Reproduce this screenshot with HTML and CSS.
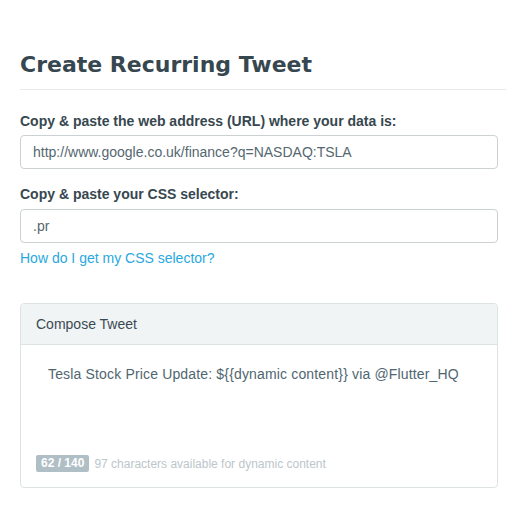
FILE: index.html
```html
<!DOCTYPE html>
<html>
<head>
<meta charset="utf-8">
<link rel="stylesheet" href="styles.css">
</head>
<body>
<div class="page">
  <header class="page-head">
    <h1 class="title">Create Recurring Tweet</h1>
  </header>
  <div class="field field-url">
    <label class="label">Copy &amp; paste the web address (URL) where your data is:</label>
    <div class="input">http://www.google.co.uk/finance?q=NASDAQ:TSLA</div>
  </div>
  <div class="field field-css">
    <label class="label">Copy &amp; paste your CSS selector:</label>
    <div class="input">.pr</div>
    <a class="help" href="#">How do I get my CSS selector?</a>
  </div>
  <section class="panel">
    <div class="panel-head">Compose Tweet</div>
    <div class="panel-body">
      <p class="tweet">Tesla Stock Price Update: ${{dynamic content}} via @Flutter_HQ</p>
      <div class="meta"><span class="badge">62 / 140</span><span class="avail">97 characters available for dynamic content</span></div>
    </div>
  </section>
</div>
</body>
</html>
```
FILE: styles.css
```css
html, body { margin: 0; padding: 0; background: #fff; }
body { font-family: "Liberation Sans", Arial, sans-serif; color: #3b4a52; }
.page { padding: 0 8px 0 20px; }
.page-head { margin-right: -8px; border-bottom: 1px solid #e8ebec; padding-top: 49px; padding-bottom: 8px; }
.title { margin: 0; font-family: "DejaVu Sans", sans-serif; font-weight: bold; font-size: 22px; line-height: 32px; color: #37474f; }
.field { display: flex; flex-direction: column; }
.label { font-weight: bold; font-size: 14px; line-height: 20px; color: #37474f; margin-bottom: 4px; }
.field-url .label { margin-top: 21px; }
.field-css .label { margin-top: 15px; margin-bottom: 5px; }
.input { height: 32px; border: 1px solid #ccd1d3; border-radius: 4px; padding: 0 12px; font-size: 14px; line-height: 32px; color: #556770; }
.help { margin-top: 5px; font-size: 14px; line-height: 20px; color: #29a8e0; text-decoration: none; align-self: flex-start; }
.panel { margin-top: 35px; border: 1px solid #dde2e4; border-radius: 4px; }
.panel-head { background: #f0f4f5; border-bottom: 1px solid #dde2e4; height: 40px; line-height: 40px; padding: 0 15px; font-size: 14px; color: #3b4a52; border-radius: 4px 4px 0 0; }
.panel-body { padding: 18px 15px 15px; }
.tweet { margin: 0 12px; font-size: 14px; line-height: 22px; letter-spacing: 0.16px; color: #4f6670; height: 92px; }
.meta { display: flex; align-items: center; gap: 5px; font-size: 12px; }
.badge { background: #b0bec5; color: #fff; font-weight: bold; padding: 0 5px; border-radius: 2px; line-height: 17px; }
.avail { color: #bcc6cb; }
```
